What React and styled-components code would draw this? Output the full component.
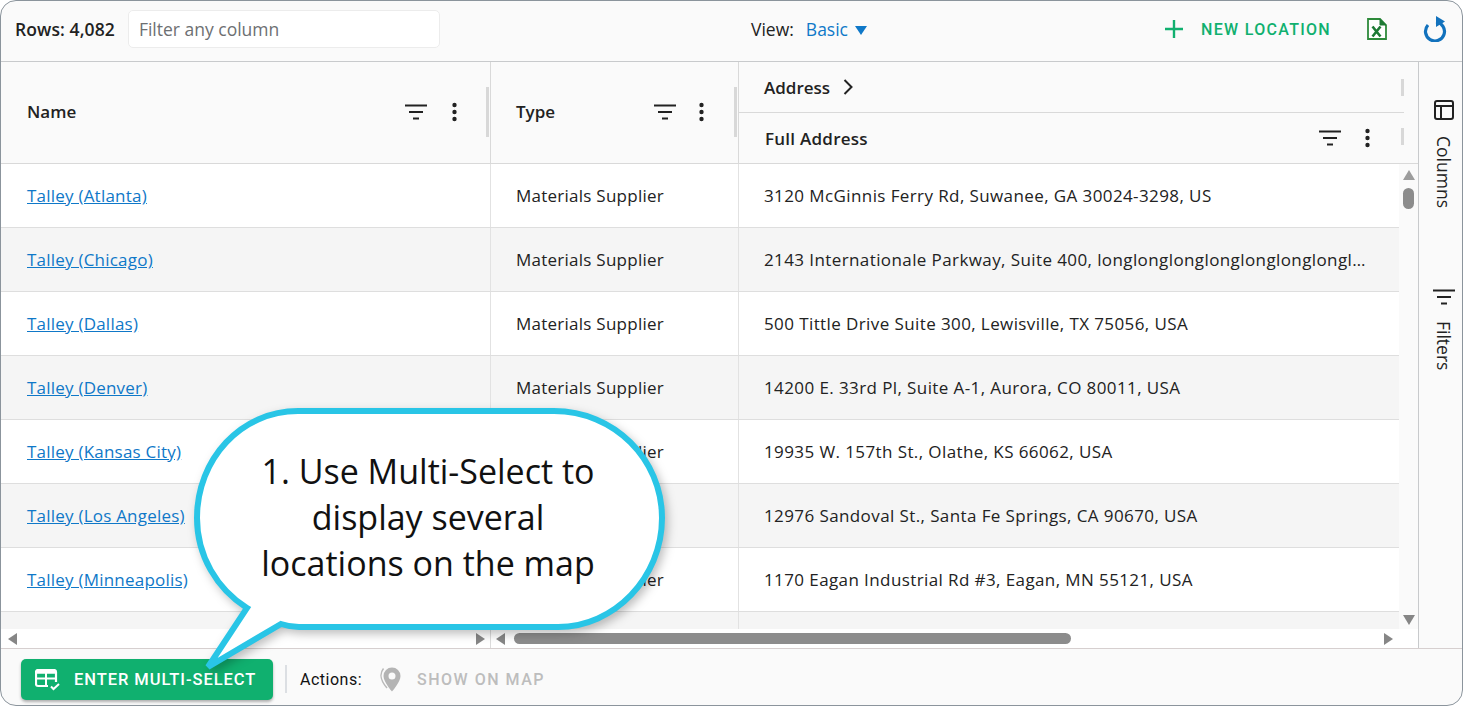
import React from 'react'
import styled, { createGlobalStyle } from 'styled-components'

const uiFont = '"Open Sans", "Noto Sans", sans-serif'
const buttonFont = 'Roboto, "Liberation Sans", sans-serif'

const rows = [
  { name: 'Talley (Atlanta)', address: '3120 McGinnis Ferry Rd, Suwanee, GA 30024-3298, US' },
  { name: 'Talley (Chicago)', address: '2143 Internationale Parkway, Suite 400, longlonglonglonglonglonglonglonglonglonglonglong' },
  { name: 'Talley (Dallas)', address: '500 Tittle Drive Suite 300, Lewisville, TX 75056, USA' },
  { name: 'Talley (Denver)', address: '14200 E. 33rd Pl, Suite A-1, Aurora, CO 80011, USA' },
  { name: 'Talley (Kansas City)', address: '19935 W. 157th St., Olathe, KS 66062, USA' },
  { name: 'Talley (Los Angeles)', address: '12976 Sandoval St., Santa Fe Springs, CA 90670, USA' },
  { name: 'Talley (Minneapolis)', address: '1170 Eagan Industrial Rd #3, Eagan, MN 55121, USA' },
  { name: '', address: '' },
]

const GlobalStyle = createGlobalStyle`
  html, body {
    margin: 0;
    padding: 0;
    background: #fff;
  }
  * {
    box-sizing: border-box;
  }
`

const Frame = styled.div`
  position: relative;
  width: 1463px;
  height: 706px;
  display: flex;
  flex-direction: column;
  overflow: hidden;
  background: #fafafa;
  border: 1px solid #8b949c;
  border-radius: 16px;
  font-family: ${uiFont};
  font-size: 17px;
  color: #222;
`

const Toolbar = styled.div`
  height: 61px;
  flex: none;
  display: grid;
  grid-template-columns: 1fr auto 1fr;
  align-items: center;
  padding: 0 15px 4px 14px;
  border-bottom: 1px solid #c8cacc;
`

const ToolbarLeft = styled.div`
  display: flex;
  align-items: center;
  gap: 13px;
`

const RowCount = styled.span`
  font-weight: 600;
  font-size: 17.5px;
  letter-spacing: 0.1px;
`

const FilterBox = styled.div`
  width: 312px;
  height: 38px;
  padding: 0 10px;
  display: flex;
  align-items: center;
  background: #fff;
  border: 1px solid #ececec;
  border-radius: 5px;
  color: #6d6f72;
  font-size: 17.5px;
`

const ViewPicker = styled.div`
  display: flex;
  align-items: center;
  gap: 12px;
  margin-left: 156px;
  font-size: 17.5px;
`

const ViewValue = styled.span`
  display: flex;
  align-items: center;
  gap: 7px;
  color: #0f78c8;
`

const Caret = styled.span`
  width: 0;
  height: 0;
  margin-top: 2px;
  border-left: 6px solid transparent;
  border-right: 6px solid transparent;
  border-top: 9px solid #0f78c8;
`

const ToolbarRight = styled.div`
  display: flex;
  align-items: center;
  justify-content: flex-end;
  gap: 36px;
`

const NewLocation = styled.span`
  display: flex;
  align-items: center;
  gap: 18px;
  color: #10b06f;
  font-family: ${buttonFont};
  font-weight: 500;
  font-size: 16px;
  letter-spacing: 1.3px;
`

const Body = styled.div`
  flex: 1;
  min-height: 0;
  display: flex;
`

const TableArea = styled.div`
  flex: 1;
  min-width: 0;
  display: flex;
  flex-direction: column;
`

const Header = styled.div`
  height: 102px;
  flex: none;
  display: grid;
  grid-template-columns: 490px 248px 1fr;
  border-bottom: 1px solid #d9d9d9;
  font-weight: 600;
  font-size: 17px;
`

const HeaderCell = styled.div`
  position: relative;
  display: flex;
  align-items: center;
  justify-content: space-between;
  padding: 0 ${(p) => p.$right}px 2px ${(p) => p.$left}px;
  border-right: 1px solid #d9d9d9;
`

const HeaderIcons = styled.div`
  display: flex;
  align-items: center;
  gap: ${(p) => p.$gap || 24}px;
`

const Grip = styled.span`
  position: absolute;
  right: ${(p) => p.$right}px;
  top: ${(p) => p.$top}px;
  width: 3px;
  height: ${(p) => p.$height}px;
  background: #d8d8d8;
`

const AddressGroup = styled.div`
  display: flex;
  flex-direction: column;
`

const AddressTitle = styled.div`
  position: relative;
  height: 51px;
  margin-right: 14px;
  padding-left: 25px;
  display: flex;
  align-items: center;
  gap: 13px;
  border-bottom: 1px solid #d9d9d9;
`

const AddressColumn = styled.div`
  position: relative;
  flex: 1;
  margin-right: 14px;
  padding: 0 34px 0 26px;
  display: flex;
  align-items: center;
  justify-content: space-between;
  letter-spacing: 0.25px;
`

const ScrollArea = styled.div`
  flex: 1;
  min-height: 0;
  display: flex;
`

const RowList = styled.div`
  flex: 1;
  min-width: 0;
  overflow: hidden;
`

const Row = styled.div`
  height: 64px;
  display: grid;
  grid-template-columns: 490px 248px minmax(0, 1fr);
  align-items: stretch;
  background: ${(p) => (p.$odd ? '#f5f5f5' : '#fff')};
  border-bottom: 1px solid #dedede;
`

const Cell = styled.div`
  display: flex;
  align-items: center;
  min-width: 0;
  padding: 0 ${(p) => p.$right || 0}px 1px ${(p) => p.$left}px;
  letter-spacing: ${(p) => p.$spacing}px;
  border-right: ${(p) => (p.$last ? 'none' : '1px solid #e2e2e2')};
`

const CellText = styled.span`
  white-space: nowrap;
  overflow: hidden;
  text-overflow: ellipsis;
`

const NameLink = styled.a`
  color: #0f78c8;
  text-decoration: underline;
`

const VerticalBar = styled.div`
  width: 19px;
  flex: none;
  display: flex;
  flex-direction: column;
  align-items: center;
  padding: 6px 0 4px;
  background: #fafafa;
`

const VerticalThumb = styled.div`
  width: 11px;
  height: 21px;
  margin-top: 8px;
  background: #8c8c8c;
  border-radius: 6px;
`

const Spacer = styled.div`
  flex: 1;
`

const HorizontalBar = styled.div`
  height: 19px;
  flex: none;
  display: grid;
  grid-template-columns: 490px 1fr;
  background: #fff;
`

const HorizontalTrack = styled.div`
  display: flex;
  align-items: center;
  padding: 0 ${(p) => p.$right}px 0 ${(p) => p.$left}px;
  border-right: ${(p) => (p.$divider ? '1px solid #dcdcdc' : 'none')};
`

const HorizontalThumb = styled.div`
  width: 557px;
  height: 11px;
  margin-left: 9px;
  background: #8c8c8c;
  border-radius: 6px;
`

const Arrow = styled.span`
  width: 0;
  height: 0;
  flex: none;
  border-style: solid;
  border-color: transparent;
  ${(p) => p.$dir === 'left' && 'border-width: 6.5px 9px 6.5px 0; border-right-color: #868686;'}
  ${(p) => p.$dir === 'right' && 'border-width: 6.5px 0 6.5px 9px; border-left-color: #868686;'}
  ${(p) => p.$dir === 'up' && 'border-width: 0 6.5px 10px; border-bottom-color: #9c9c9c;'}
  ${(p) => p.$dir === 'down' && 'border-width: 10px 6.5px 0; border-top-color: #868686;'}
`

const SidePanel = styled.div`
  width: 44px;
  flex: none;
  display: flex;
  flex-direction: column;
  align-items: center;
  padding: 38px 0 0 7px;
  border-left: 1px solid #c8cacc;
`

const SideTab = styled.div`
  display: flex;
  flex-direction: column;
  align-items: center;
  gap: 16px;
  height: ${(p) => p.$height}px;
`

const SideLabel = styled.span`
  writing-mode: vertical-rl;
  font-size: 17.5px;
  line-height: 20px;
`

const Footer = styled.div`
  height: 57px;
  flex: none;
  display: flex;
  align-items: center;
  padding: 4px 0 0 20px;
  border-top: 1px solid #d6cfcf;
`

const EnterButton = styled.button`
  width: 252px;
  height: 41px;
  display: flex;
  align-items: center;
  gap: 13px;
  padding: 1px 0 0 14px;
  color: #fff;
  background: #10b06f;
  border: none;
  border-radius: 5px;
  box-shadow: 0 2px 3px rgba(0, 0, 0, 0.3);
  font-family: ${buttonFont};
  font-weight: 500;
  font-size: 16.5px;
  letter-spacing: 0.95px;
`

const FooterDivider = styled.span`
  width: 2px;
  height: 28px;
  margin: 0 13px 0 12px;
  background: #dcdfe3;
`

const ActionsLabel = styled.span`
  font-family: ${buttonFont};
  font-size: 16px;
  letter-spacing: 0.5px;
  color: #111;
  margin: 1px 17px 0 0;
`

const ShowOnMap = styled.span`
  display: flex;
  align-items: center;
  gap: 16px;
  padding-top: 1px;
  color: #bdbdbd;
  font-family: ${buttonFont};
  font-weight: 500;
  font-size: 16px;
  letter-spacing: 1.5px;
`

const Callout = styled.div`
  position: absolute;
  left: 190px;
  top: 403px;
  width: 480px;
  height: 272px;
`

const CalloutShape = styled.svg`
  position: absolute;
  inset: 0;
  overflow: visible;
  filter: drop-shadow(3px 4px 5px rgba(0, 0, 0, 0.25));
`

const CalloutText = styled.div`
  position: absolute;
  left: 0;
  top: 44px;
  width: 474px;
  text-align: center;
  font-size: 34px;
  line-height: 46px;
  color: #111;
`

function FilterIcon() {
  return (
    <svg width="22" height="16" viewBox="0 0 22 16" fill="none" stroke="#222" strokeWidth="2.2">
      <path d="M0 1.500h22M4 8h14M8 14.500h6" />
    </svg>
  )
}

function MoreIcon() {
  return (
    <svg width="5" height="20" viewBox="0 0 5 20" fill="#222">
      <circle cx="2.500" cy="3" r="2.200" />
      <circle cx="2.500" cy="10" r="2.200" />
      <circle cx="2.500" cy="17" r="2.200" />
    </svg>
  )
}

function PlusIcon() {
  return (
    <svg width="18" height="18" viewBox="0 0 18 18" stroke="#10b06f" strokeWidth="2.400">
      <path d="M9 0v18M0 9h18" />
    </svg>
  )
}

function ExcelIcon() {
  return (
    <svg width="20" height="22" viewBox="0 0 20 22" fill="none">
      <path d="M1 1h12l6 6v14H1z" fill="#fff" stroke="#2d8a3a" strokeWidth="1.800" />
      <path d="M13 1l6 6h-6z" fill="#1f7a34" stroke="#1f7a34" strokeWidth="1" />
      <path d="M5.500 8.500l8 10M13.500 8.500l-8 10" stroke="#1d7a35" strokeWidth="2.600" />
    </svg>
  )
}

function RefreshIcon() {
  return (
    <svg width="24" height="26" viewBox="0 0 24 26" fill="none">
      <path d="M5 9A9.500 9.500 0 1 0 13 6" stroke="#1272bd" strokeWidth="3.200" />
      <path d="M13 0L22 5.500L13 11z" fill="#1272bd" />
    </svg>
  )
}

function ChevronIcon() {
  return (
    <svg width="10" height="16" viewBox="0 0 10 16" fill="none" stroke="#222" strokeWidth="2">
      <path d="M1.500 1l7 7-7 7" />
    </svg>
  )
}

function ColumnsIcon() {
  return (
    <svg width="20" height="20" viewBox="0 0 20 20" fill="none" stroke="#222" strokeWidth="2">
      <rect x="1" y="1" width="18" height="18" rx="2" />
      <path d="M1 6h18M7 6v13" />
    </svg>
  )
}

function TableCheckIcon() {
  return (
    <svg width="26" height="22" viewBox="0 0 26 22" fill="none">
      <path d="M13 17H3a2 2 0 0 1-2-2V3a2 2 0 0 1 2-2h16a2 2 0 0 1 2 2v10" stroke="#fff" strokeWidth="2.200" />
      <path d="M1 3h20" stroke="#fff" strokeWidth="3.500" />
      <path d="M1 9.500h20M11 3v14" stroke="#fff" strokeWidth="2" />
      <path d="M16 17.500l2.500 2.500 5.500-5" stroke="#fff" strokeWidth="2" />
    </svg>
  )
}

function PinIcon() {
  return (
    <svg width="22" height="25" viewBox="0 0 22 25" fill="none">
      <path
        d="M13 .5a8.500 8.500 0 0 0-8.500 8.500C4.500 15 13 24.500 13 24.500S21.500 15 21.500 9A8.500 8.500 0 0 0 13 .5zm0 12a3.500 3.500 0 1 1 0-7 3.500 3.500 0 0 1 0 7z"
        fill="#b4b4b4"
      />
      <path d="M4.500 1.500C.5 6.500 .5 12 8 21" stroke="#b9b9b9" strokeWidth="1.500" />
    </svg>
  )
}

export default function App() {
  return (
    <>
      <GlobalStyle />
      <Frame>
        <Toolbar>
          <ToolbarLeft>
            <RowCount>Rows: 4,082</RowCount>
            <FilterBox>Filter any column</FilterBox>
          </ToolbarLeft>
          <ViewPicker>
            <span>View:</span>
            <ViewValue>
              Basic <Caret />
            </ViewValue>
          </ViewPicker>
          <ToolbarRight>
            <NewLocation>
              <PlusIcon />
              NEW LOCATION
            </NewLocation>
            <ExcelIcon />
            <RefreshIcon />
          </ToolbarRight>
        </Toolbar>

        <Body>
          <TableArea>
            <Header>
              <HeaderCell $left={26} $right={33}>
                Name
                <HeaderIcons $gap={25}>
                  <FilterIcon />
                  <MoreIcon />
                </HeaderIcons>
                <Grip $right={1} $top={25} $height={50} />
              </HeaderCell>
              <HeaderCell $left={25} $right={34}>
                Type
                <HeaderIcons $gap={23}>
                  <FilterIcon />
                  <MoreIcon />
                </HeaderIcons>
                <Grip $right={1} $top={25} $height={50} />
              </HeaderCell>
              <AddressGroup>
                <AddressTitle>
                  Address <ChevronIcon />
                  <Grip $right={0} $top={17} $height={17} />
                </AddressTitle>
                <AddressColumn>
                  Full Address
                  <HeaderIcons>
                    <FilterIcon />
                    <MoreIcon />
                  </HeaderIcons>
                  <Grip $right={0} $top={15} $height={17} />
                </AddressColumn>
              </AddressGroup>
            </Header>

            <ScrollArea>
              <RowList>
                {rows.map((row, i) => (
                  <Row key={i} $odd={i % 2 === 1}>
                    <Cell $left={26} $spacing={0.22}>
                      <NameLink>{row.name}</NameLink>
                    </Cell>
                    <Cell $left={25} $spacing={0.25}>
                      {row.name && 'Materials Supplier'}
                    </Cell>
                    <Cell $left={25} $right={27} $spacing={0.4} $last>
                      <CellText>{row.address}</CellText>
                    </Cell>
                  </Row>
                ))}
              </RowList>
              <VerticalBar>
                <Arrow $dir="up" />
                <VerticalThumb />
                <Spacer />
                <Arrow $dir="down" />
              </VerticalBar>
            </ScrollArea>

            <HorizontalBar>
              <HorizontalTrack $left={7} $right={5} $divider>
                <Arrow $dir="left" />
                <Spacer />
                <Arrow $dir="right" />
              </HorizontalTrack>
              <HorizontalTrack $left={5} $right={25}>
                <Arrow $dir="left" />
                <HorizontalThumb />
                <Spacer />
                <Arrow $dir="right" />
              </HorizontalTrack>
            </HorizontalBar>
          </TableArea>

          <SidePanel>
            <SideTab $height={189}>
              <ColumnsIcon />
              <SideLabel>Columns</SideLabel>
            </SideTab>
            <SideTab $height={100}>
              <FilterIcon />
              <SideLabel>Filters</SideLabel>
            </SideTab>
          </SidePanel>
        </Body>

        <Footer>
          <EnterButton>
            <TableCheckIcon />
            ENTER MULTI-SELECT
          </EnterButton>
          <FooterDivider />
          <ActionsLabel>Actions:</ActionsLabel>
          <ShowOnMap>
            <PinIcon />
            SHOW ON MAP
          </ShowOnMap>
        </Footer>

        <Callout>
          <CalloutShape width="480" height="272" viewBox="0 0 480 272" fill="#fff" stroke="#29c5e6" strokeWidth="6">
            <path d="M107 7H363C423 7 471 55 471 114C471 174 423 223 367 223H108C100 223 96 222 90 220L17 263L56 204C26 185 6 152 6 114C6 55 50 7 107 7Z" />
          </CalloutShape>
          <CalloutText>
            1. Use Multi-Select to
            <br />
            display several
            <br />
            locations on the map
          </CalloutText>
        </Callout>
      </Frame>
    </>
  )
}
